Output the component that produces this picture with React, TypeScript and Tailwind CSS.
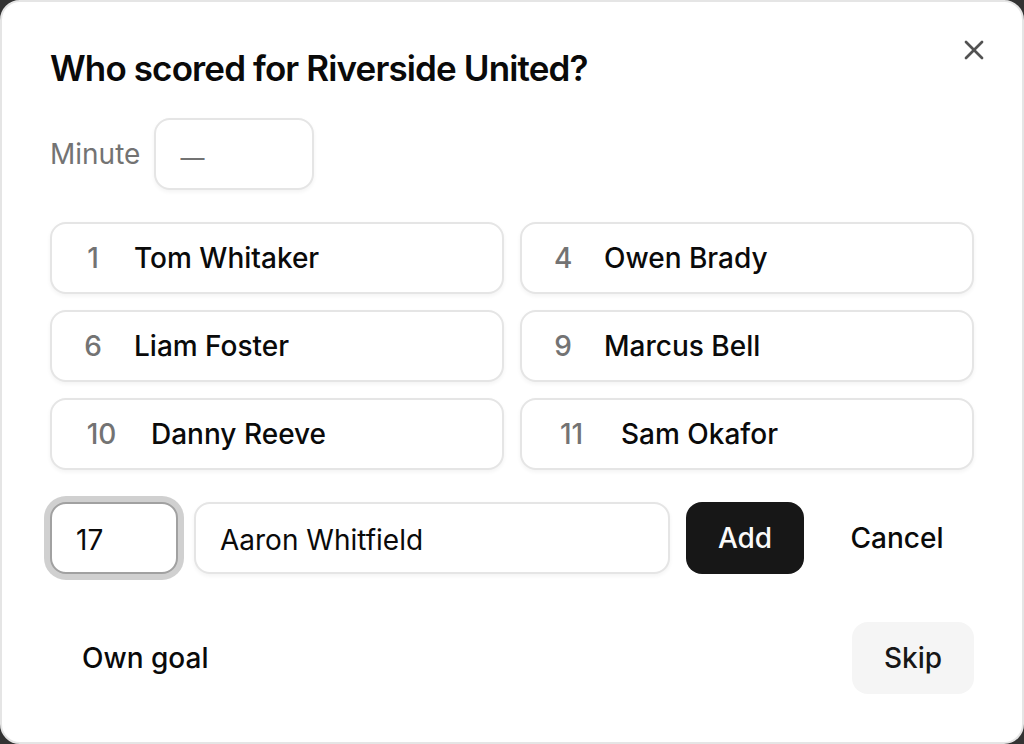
import { X } from "lucide-react";

type Player = { number: number; name: string };

const players: Player[] = [
  { number: 1, name: "Tom Whitaker" },
  { number: 4, name: "Owen Brady" },
  { number: 6, name: "Liam Foster" },
  { number: 9, name: "Marcus Bell" },
  { number: 10, name: "Danny Reeve" },
  { number: 11, name: "Sam Okafor" },
];

const field =
  "h-[72px] min-w-0 rounded-2xl border-2 bg-white px-6 pt-1 text-[28px] text-[#0a0a0a] outline-none placeholder:text-[24px] placeholder:text-[#737373]";
const plainField = "border-[#e5e5e5] shadow-[0_2px_4px_rgb(0_0_0/0.05)]";
const focusedField = "border-[#a1a1a1] ring-6 ring-[#d0d0d0]";

export default function App() {
  return (
    <div className="min-h-screen bg-[#333333] font-['Inter',sans-serif] text-[#0a0a0a]">
      <section
        role="dialog"
        aria-labelledby="dialog-title"
        className="relative flex min-h-screen flex-col gap-8 rounded-[20px] border-2 border-[#e5e5e5] bg-white p-12"
      >
        <h1 id="dialog-title" className="text-[35px] leading-[36px] font-semibold tracking-tight">
          Who scored for Riverside United?
        </h1>
        <button type="button" aria-label="Close" className="absolute top-8 right-8 text-[#525252]">
          <X size={32} strokeWidth={2} />
        </button>

        <div className="flex items-center gap-[14px]">
          <label htmlFor="minute" className="text-[28px] text-[#737373]">Minute</label>
          <input id="minute" placeholder="—" className={`${field} ${plainField} w-40`} />
        </div>

        <div className="grid grid-cols-2 gap-4">
          {players.map((p) => (
            <button
              key={p.number}
              type="button"
              className="flex h-[72px] items-center gap-8 rounded-2xl border-2 border-[#e5e5e5] bg-white px-8 text-[28px] font-medium shadow-[0_2px_4px_rgb(0_0_0/0.05)]"
            >
              <span className={`text-center text-[#737373] ${p.number > 9 ? "w-[35px]" : "w-[18px]"}`}>{p.number}</span>
              <span>{p.name}</span>
            </button>
          ))}
        </div>

        <div className="flex items-center gap-4">
          <input aria-label="Shirt number" defaultValue="17" className={`${field} ${focusedField} w-32`} />
          <input aria-label="Player name" defaultValue="Aaron Whitfield" className={`${field} ${plainField} flex-1`} />
          <button type="button" className="h-[72px] w-[118px] rounded-2xl bg-[#171717] text-[28px] font-medium text-[#fafafa]">Add</button>
          <button type="button" className="h-[72px] w-[154px] rounded-2xl text-[28px] font-medium">Cancel</button>
        </div>

        <div className="flex items-center justify-between pt-4">
          <button type="button" className="h-[72px] rounded-2xl px-8 text-[28px] font-medium">Own goal</button>
          <button type="button" className="h-[72px] rounded-2xl bg-[#f5f5f5] px-8 text-[28px] font-medium text-[#171717]">Skip</button>
        </div>
      </section>
    </div>
  );
}
